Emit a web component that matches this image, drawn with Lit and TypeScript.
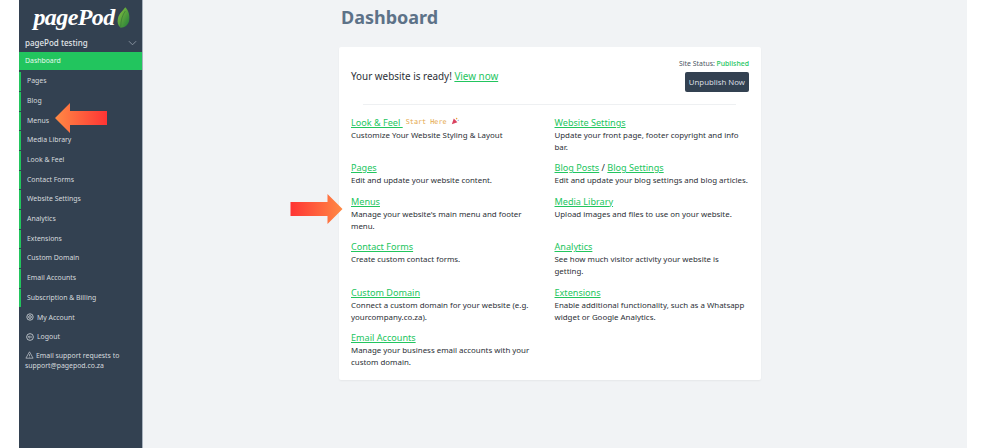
import { LitElement, html, css } from "lit";
import { customElement } from "lit/decorators.js";

const NAV = ["Pages","Blog","Menus","Media Library","Look & Feel","Contact Forms","Website Settings","Analytics","Extensions","Custom Domain","Email Accounts","Subscription & Billing"];

const ITEMS: [any, string][] = [
  [html`<a>Look &amp; Feel </a><span class="start">Start Here</span> <svg class="party" viewBox="0 0 10 10" width="8" height="8"><path d="M1 9 L3.5 2 L8 6.5 Z" fill="#d9415f"/><circle cx="7" cy="2" r="1" fill="#e8a33d"/><circle cx="9" cy="4" r=".7" fill="#5a8fd8"/></svg>`, "Customize Your Website Styling & Layout"],
  [html`<a>Website Settings</a>`, "Update your front page, footer copyright and info bar."],
  [html`<a>Pages</a>`, "Edit and update your website content."],
  [html`<a>Blog Posts</a> <b class="sl">/</b> <a>Blog Settings</a>`, "Edit and update your blog settings and blog articles."],
  [html`<a>Menus</a>`, "Manage your website's main menu and footer menu."],
  [html`<a>Media Library</a>`, "Upload images and files to use on your website."],
  [html`<a>Contact Forms</a>`, "Create custom contact forms."],
  [html`<a>Analytics</a>`, "See how much visitor activity your website is getting."],
  [html`<a>Custom Domain</a>`, "Connect a custom domain for your website (e.g. yourcompany.co.za)."],
  [html`<a>Extensions</a>`, "Enable additional functionality, such as a Whatsapp widget or Google Analytics."],
  [html`<a>Email Accounts</a>`, "Manage your business email accounts with your custom domain."],
];

const arrow = (id: string, flip: boolean, w: number, h: number) => html`<svg viewBox="0 0 52 30" width=${w} height=${h} style=${flip ? "transform:scaleX(-1)" : ""}>
  <defs><linearGradient id=${id} x1="0" x2="1" y1="0" y2="0"><stop offset="0" stop-color="#ff3434"/><stop offset="1" stop-color="#ff8a45"/></linearGradient></defs>
  <path d="M0 8 H37 V0 L52 15 L37 30 V22 H0 Z" fill="url(#${id})"/></svg>`;

@customElement("app-root")
export class AppRoot extends LitElement {
  static styles = css`
    :host { display: block; width: 1000px; height: 448px; overflow: hidden; background: #fff; font-family: "Noto Sans", sans-serif; }
    .page { display: flex; height: 448px; padding-left: 19px; box-sizing: border-box; }
    .side { width: 124px; flex: none; background: #334151; border-right: 1px solid #a8b2bd; box-sizing: border-box; color: #d5dade; position: relative; }
    .logo { height: 33px; display: flex; align-items: center; justify-content: center; gap: 2px; color: #fff; font: italic bold 24px "Liberation Serif", serif; letter-spacing: -.6px; padding: 1px 0 0 2px; box-sizing: border-box; }
    .site { height: 19px; display: flex; align-items: center; justify-content: space-between; padding: 0 5px 0 6px; font-size: 8px; font-weight: 500; color: #e2e6e9; }
    .active { height: 18px; background: #22c55e; color: #e6f9ed; font-size: 6.9px; line-height: 18px; padding-left: 6px; }
    .nav { display: flex; flex-direction: column; padding-top: 2.2px; }
    .item { height: 18.7px; margin-bottom: 1px; border-left: 2px solid #22c55e; padding-left: 6px; font-size: 6.9px; line-height: 18.7px; white-space: nowrap; }
    .plain { height: 19.7px; display: flex; align-items: center; gap: 3px; padding-left: 7px; font-size: 6.9px; position: relative; top: -1px; }
    .note { padding: 3px 6px 0; font-size: 6.9px; line-height: 10px; }
    .note svg { vertical-align: -1.5px; margin-right: 2px; }
    .side-arrow { position: absolute; left: 36px; top: 103px; display: flex; }
    .main { width: 824px; flex: none; background: #f1f3f5; position: relative; box-sizing: border-box; padding: 6px 0 0 196px; }
    h1 { margin: 0 0 18px 2px; font-size: 18px; line-height: 23px; font-weight: 700; color: #5d7288; }
    .card { width: 422px; height: 333px; background: #fff; border-radius: 2px; box-shadow: 0 1px 2px rgba(0,0,0,.05); box-sizing: border-box; padding: 12px 12px 0; color: #2b2f36; }
    .top { display: flex; justify-content: space-between; height: 45px; }
    .ready { font-size: 9.9px; padding-top: 10px; line-height: 14px; }
    .status { display: flex; flex-direction: column; align-items: flex-end; font-size: 6.9px; line-height: 10px; color: #4b5563; }
    .pub { color: #22c55e; font-weight: 500; }
    .btn { margin-top: 3px; height: 20px; padding: 0 4px; background: #334151; color: #d9dde1; border-radius: 2px; font-size: 7.8px; line-height: 20px; }
    hr { border: 0; border-top: 1px solid #eef0f2; margin: 0 13px 11px 12px; }
    a { color: #22c55e; text-decoration: underline; }
    .grid { display: grid; grid-template-columns: 203.5px 194px; }
    .cell { padding-bottom: 7.6px; max-width: 194px; }
    .title { font-size: 9.1px; line-height: 14px; white-space: nowrap; }
    .desc { font-size: 7.9px; line-height: 11.9px; }
    .sl { color: #2b2f36; font-weight: 400; }
    .start { font: 6.8px "DejaVu Sans Mono", monospace; color: #e5a84b; position: relative; top: -2.5px; margin-left: 3px; }
    .party { position: relative; top: -1px; left: 2px; }
    .main-arrow { position: absolute; left: 147px; top: 194px; display: flex; }
  `;

  render() {
    return html`<div class="page">
      <aside class="side">
        <div class="logo"><span>pagePod</span>
          <svg viewBox="0 0 14 24" width="13" height="23"><defs><linearGradient id="leaf" x1="0" x2="1" y1="0" y2="1"><stop offset="0" stop-color="#8cc63f"/><stop offset="1" stop-color="#1f7a3a"/></linearGradient></defs><path d="M9 1 C13 5 14 11 13 16 C12 20 8 23 4 23 C1 21 0 17 1 13 C2 8 6 5 9 1 Z" fill="url(#leaf)"/><path d="M9 5 C6 9 4 15 4 22" stroke="#2f6f35" stroke-width=".6" fill="none"/></svg>
        </div>
        <div class="site"><span>pagePod testing</span><svg viewBox="0 0 10 6" width="9" height="6"><path d="M1 1 L5 5 L9 1" stroke="#8f9aa6" stroke-width="1" fill="none"/></svg></div>
        <div class="active">Dashboard</div>
        <div class="nav">
          ${NAV.map((n) => html`<div class="item">${n}</div>`)}
          <div class="plain"><svg viewBox="0 0 10 10" width="8" height="8"><circle cx="5" cy="5" r="4" fill="none" stroke="#d5dade"/><circle cx="5" cy="5" r="1.7" fill="none" stroke="#d5dade"/></svg>My Account</div>
          <div class="plain"><svg viewBox="0 0 10 10" width="8" height="8"><circle cx="5" cy="5" r="4.2" fill="none" stroke="#d5dade"/><path d="M7.5 5 H3 M4.6 3.4 L3 5 L4.6 6.6" fill="none" stroke="#d5dade" stroke-width=".9"/></svg>Logout</div>
          <div class="note"><svg viewBox="0 0 10 10" width="9" height="8"><path d="M5 1 L9.5 9 H.5 Z M5 4 V6.5 M5 7.3 V8" fill="none" stroke="#d5dade" stroke-width=".8"/></svg>Email support requests to support@pagepod.co.za</div>
        </div>
        <div class="side-arrow">${arrow("ga", true, 52, 30)}</div>
      </aside>
      <main class="main">
        <h1>Dashboard</h1>
        <section class="card">
          <div class="top">
            <div class="ready">Your website is ready! <a>View now</a></div>
            <div class="status"><div>Site Status: <span class="pub">Published</span></div><div class="btn">Unpublish Now</div></div>
          </div>
          <hr />
          <div class="grid">
            ${ITEMS.map(([t, d]) => html`<div class="cell"><div class="title">${t}</div><div class="desc">${d}</div></div>`)}
          </div>
        </section>
        <div class="main-arrow">${arrow("gb", false, 53, 30)}</div>
      </main>
    </div>`;
  }
}
